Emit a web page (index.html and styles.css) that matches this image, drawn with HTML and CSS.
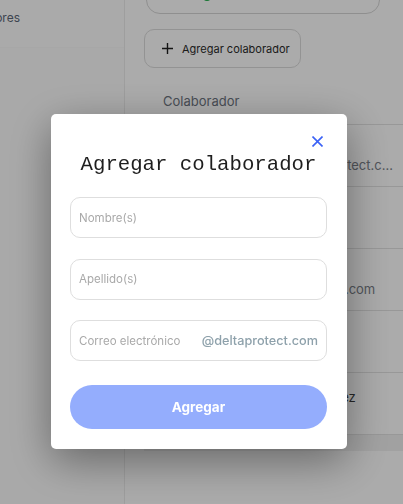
FILE: index.html
```html
<!DOCTYPE html>
<html lang="es">
<head>
<meta charset="utf-8">
<title>Agregar colaborador</title>
<link rel="stylesheet" href="styles.css">
</head>
<body>
<div class="app">
  <aside class="sidebar">
    <div class="side-item active">
      <div class="side-label-wrap"><span class="side-label">Colaboradores</span></div>
    </div>
  </aside>
  <main class="main">
    <div class="top-card">
      <span class="status-dot"></span>
    </div>
    <button class="add-btn" type="button">
      <svg class="plus" width="11" height="11" viewBox="0 0 11 11"><path d="M5.5 0v11M0 5.5h11" stroke="#1f1f1f" stroke-width="1.4" fill="none"/></svg>
      <span>Agregar colaborador</span>
    </button>
    <div class="table">
      <div class="table-head">Colaborador</div>
      <div class="row">
        <div class="name">Alejandro Martínez</div>
        <div class="email">alejandro.martinez.l@deltaprotect.com</div>
      </div>
      <div class="row">
        <div class="name">Sofía Ramírez</div>
        <div class="email">sramirez@deltaprotect.com</div>
      </div>
      <div class="row">
        <div class="name">Luis Hernández</div>
        <div class="email">luis.hernandezr@deltaprotect.com</div>
      </div>
      <div class="row">
        <div class="name">Carla Ortiz</div>
        <div class="email">cortiz@deltaprotect.com</div>
      </div>
      <div class="row">
        <div class="name">María Fernanda Álvarez Gómez</div>
        <div class="email">malvarez@deltaprotect.com</div>
      </div>
      <div class="table-foot"></div>
    </div>
  </main>
</div>

<div class="overlay">
  <div class="modal" role="dialog" aria-labelledby="modal-title">
    <div class="modal-top">
      <button class="close" type="button" aria-label="Cerrar">
        <svg width="11" height="11" viewBox="0 0 11 11"><path d="M0.5 0.5l10 10M10.5 0.5l-10 10" stroke="#3b62f6" stroke-width="1.6" fill="none"/></svg>
      </button>
    </div>
    <h2 class="modal-title" id="modal-title">Agregar colaborador</h2>
    <form class="form">
      <input class="field" type="text" placeholder="Nombre(s)">
      <input class="field" type="text" placeholder="Apellido(s)">
      <div class="field email-field">
        <input class="email-input" type="text" placeholder="Correo electrónico">
        <span class="domain">@deltaprotect.com</span>
      </div>
      <button class="submit" type="button">Agregar</button>
    </form>
  </div>
</div>
</body>
</html>
```
FILE: styles.css
```css
* { box-sizing: border-box; }

html, body {
  margin: 0;
  padding: 0;
  height: 100%;
  overflow: hidden;
}

body {
  font-family: Inter, "Noto Sans", sans-serif;
  background: #ffffff;
  color: #333;
}

.app {
  display: grid;
  grid-template-columns: 125px 1fr;
  height: 504px;
  overflow: hidden;
}

.sidebar {
  border-right: 1px solid #ececec;
  background: #fdfdfd;
}

.side-item {
  height: 48px;
  display: flex;
  align-items: center;
  background: #fefefe;
  border-bottom: 1px solid #fafafa;
}

.side-label-wrap {
  width: 20px;
  display: flex;
  justify-content: flex-end;
  padding-bottom: 13px;
}

.side-label {
  white-space: nowrap;
  font-size: 12px;
  color: #5c6878;
}

.main {
  padding-left: 19px;
  min-width: 0;
  overflow: hidden;
}

.top-card {
  margin-top: -30px;
  margin-left: 2px;
  width: 234px;
  height: 44px;
  border: 1px solid #d6d6d6;
  border-radius: 14px;
  display: flex;
  align-items: flex-end;
  padding-left: 55px;
  padding-bottom: 12px;
}

.status-dot {
  width: 10px;
  height: 10px;
  border-radius: 50%;
  background: #22b04b;
}

.add-btn {
  margin-top: 15px;
  width: 157px;
  height: 39px;
  border: 1px solid #dcdcdc;
  border-radius: 10px;
  background: #ffffff;
  display: flex;
  align-items: center;
  gap: 9px;
  padding: 0 0 0 17px;
  font-family: inherit;
  font-size: 11px;
  color: #2b2b2b;
}

.plus { flex: none; }

.table {
  width: 100%;
}

.table-head {
  height: 57px;
  padding: 24px 0 0 19px;
  line-height: 18px;
  font-size: 13px;
  color: #6c7480;
  border-bottom: 1px solid #e3e3e3;
}

.row {
  height: 62px;
  padding: 16px 0 0 19px;
  border-bottom: 1px solid #e3e3e3;
  line-height: 16px;
}

.name {
  font-size: 13px;
  color: #3a3a3a;
  white-space: nowrap;
}

.email {
  font-size: 13px;
  color: #7a8088;
  width: 232px;
  white-space: nowrap;
  overflow: hidden;
  text-overflow: ellipsis;
}

.table-foot {
  height: 16px;
  background: #f1f1f1;
}

/* Overlay & modal */
.overlay {
  position: fixed;
  inset: 0;
  background: rgba(0, 0, 0, 0.33);
  display: flex;
  justify-content: center;
  align-items: flex-start;
  padding: 114px 5px 0 0;
}

.modal {
  width: 296px;
  background: #ffffff;
  border-radius: 5px;
  padding: 17px 20px 20px 19px;
  box-shadow: 0 12px 44px rgba(0, 0, 0, 0.4);
}

.modal-top {
  display: flex;
  justify-content: flex-end;
}

.close {
  width: 20px;
  height: 20px;
  border: 0;
  padding: 0;
  background: transparent;
  display: flex;
  align-items: center;
  justify-content: center;
}

.modal-title {
  margin: 0;
  text-align: center;
  font-family: "Liberation Mono", monospace;
  font-weight: 400;
  font-size: 20.7px;
  line-height: 28px;
  color: #1e1e1e;
}

.form {
  margin: 18px 0 0;
  display: flex;
  flex-direction: column;
  gap: 20.5px;
}

.field {
  height: 41px;
  width: 100%;
  border: 1px solid #dedede;
  border-radius: 10px;
  padding: 0 8px;
  font-family: inherit;
  font-size: 11.5px;
  color: #333;
  background: #fff;
  outline: none;
}

.field::placeholder,
.email-input::placeholder {
  color: #a9a9a9;
}

.email-field {
  display: flex;
  align-items: center;
  padding-right: 8px;
}

.email-input {
  flex: 1;
  min-width: 0;
  border: 0;
  padding: 0;
  font-family: inherit;
  font-size: 11.5px;
  outline: none;
  background: transparent;
}

.domain {
  font-size: 12.7px;
  font-weight: 500;
  color: #8ea1ab;
  white-space: nowrap;
}

.submit {
  margin-top: 3.5px;
  height: 44px;
  border: 0;
  border-radius: 22px;
  background: #94adfd;
  color: #ffffff;
  font-family: inherit;
  font-weight: 700;
  font-size: 13.5px;
}
```
